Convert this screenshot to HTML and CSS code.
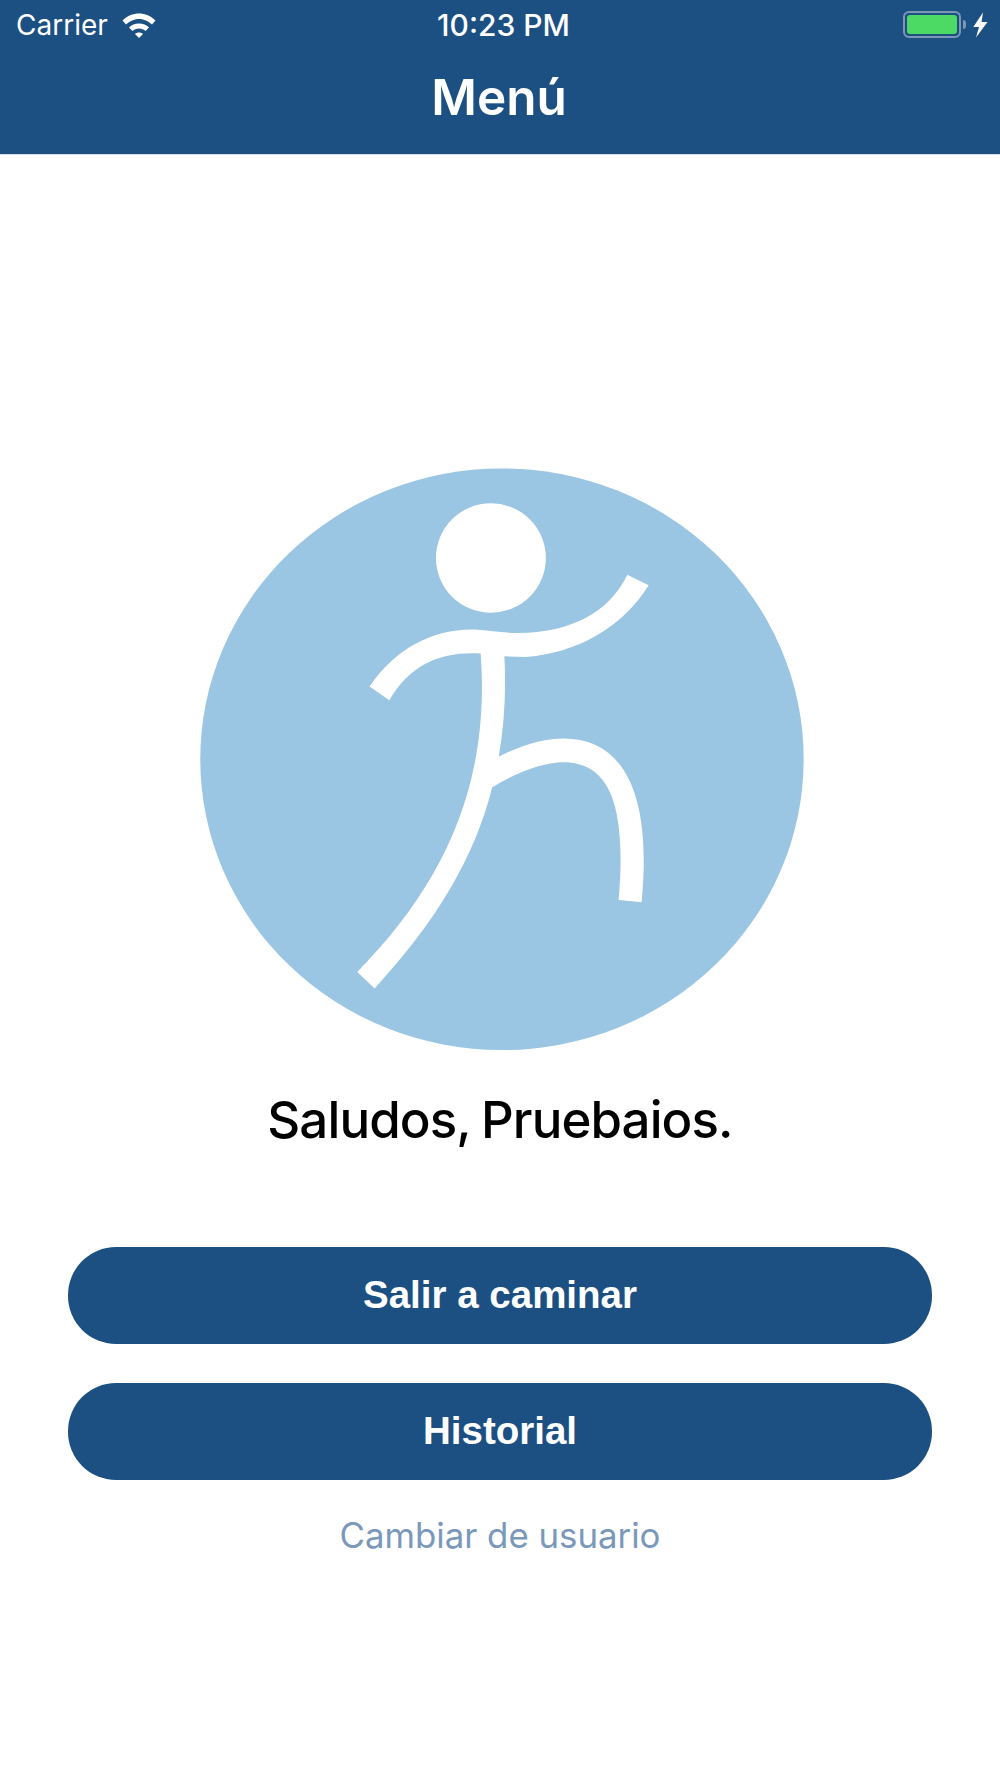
FILE: index.html
```html
<!DOCTYPE html>
<html lang="es">
<head>
    <meta charset="UTF-8">
    <meta name="viewport" content="width=device-width, initial-scale=1.0">
    <title>Menú</title>
    <link rel="stylesheet" href="styles.css">
</head>
<body>

<header class="header">
    <div class="status-bar">
        <div class="status-left">
            <span>Carrier</span>
            <svg class="wifi" width="34" height="25" viewBox="0 0 34 25">
                <path d="M0.5 7.5C5 3 11 0.5 17 0.5C23 0.5 29 3 33.5 7.5L30 11.5C27 8.5 22 6 17 6C12 6 7 8.5 4 11.5Z"/>
                <path d="M7 14.5C9.5 12 13 10.5 17 10.5C21 10.5 24.5 12 27 14.5L23.5 18C22 16.5 19.5 15.5 17 15.5C14.5 15.5 12 16.5 10.5 18Z"/>
                <path d="M13 21C14 20 15.5 19.5 17 19.5C18.5 19.5 20 20 21 21L17 25Z"/>
            </svg>
        </div>
        <div class="status-time">10:23 PM</div>
        <div class="status-right">
            <div class="battery"><div class="battery-level"></div></div>
            <div class="battery-nub"></div>
            <svg class="bolt" width="15" height="26" viewBox="0 0 15 26">
                <path d="M10 0.5L0.3 15H6L3 25.5L14.5 10H8.5Z"/>
            </svg>
        </div>
    </div>
    <h1 class="title">Menú</h1>
</header>

<main class="content">
    <svg class="logo" width="620" height="600" viewBox="0 0 1568 1568" preserveAspectRatio="none">
        <ellipse class="logo-bg" cx="789" cy="782" rx="763" ry="760"/>
        <ellipse class="logo-fig" cx="761" cy="256" rx="139" ry="143"/>
        <path class="logo-fig" d="M454 592C520 490 620 440 720 443C760 446 790 452 830 452C960 452 1060 400 1106 300L1160 327C1095 435 985 502 850 515L795 513C800 600 795 690 781 775C850 740 900 728 945 728C1090 728 1170 860 1142 1156L1084 1150C1105 900 1060 790 945 790C890 790 820 820 764 856C720 1040 620 1210 467 1381L423 1338C640 1110 760 850 735 506C640 500 560 530 504 628Z"/>
    </svg>
    <p class="greeting">Saludos, Pruebaios.</p>
    <div class="actions">
        <button class="btn">Salir a caminar</button>
        <button class="btn">Historial</button>
    </div>
    <a class="switch-user" href="#">Cambiar de usuario</a>
</main>

</body>
</html>
```

FILE: styles.css
```css
body {
    margin: 0;
    height: 1778px;
    background-color: #fff;
    font-family: 'Inter', sans-serif;
    overflow: hidden;
}
.header {
    height: 154px;
    background-color: #1c5082;
    border-bottom: 1px solid #d5dde6;
    color: #fff;
}
.status-bar {
    display: grid;
    grid-template-columns: 1fr auto 1fr;
    align-items: center;
    height: 50px;
    padding: 0 12px 0 16px;
    font-size: 28px;
}
.status-left {
    display: flex;
    align-items: center;
    gap: 14px;
}
.wifi, .bolt {
    fill: #fff;
}
.status-time {
    padding-left: 3px;
    font-size: 30px;
    font-weight: 500;
}
.status-right {
    display: flex;
    align-items: center;
    justify-content: flex-end;
    padding-bottom: 2px;
}
.battery {
    width: 49.5px;
    height: 19px;
    padding: 2px;
    border: 2px solid #7a97b8;
    border-radius: 6px;
}
.battery-level {
    height: 100%;
    background-color: #4cd964;
    border-radius: 3px;
}
.battery-nub {
    width: 3px;
    height: 9px;
    margin: 0 7px 0 2.5px;
    background-color: #7a97b8;
    border-radius: 0 3px 3px 0;
}
.bolt {
    margin-top: 2px;
}
.title {
    margin: 0;
    padding-right: 2px;
    line-height: 94px;
    text-align: center;
    font-size: 49.5px;
    font-weight: 600;
}
.content {
    display: flex;
    flex-direction: column;
    align-items: center;
    padding-top: 305px;
}
.logo {
    display: block;
}
.logo-bg {
    fill: #9ac5e3;
}
.logo-fig {
    fill: #fff;
}
.greeting {
    margin: 30px 0 0;
    line-height: 60px;
    font-size: 51px;
    font-weight: 450;
    letter-spacing: -0.9px;
    word-spacing: -2px;
    color: #000;
}
.actions {
    display: flex;
    flex-direction: column;
    gap: 39.5px;
    width: 864px;
    margin-top: 97px;
}
.btn {
    height: 96.5px;
    border: none;
    border-radius: 48px;
    background-color: #1c5082;
    color: #fff;
    font-family: 'Liberation Sans', sans-serif;
    font-size: 38.5px;
    font-weight: bold;
}
.switch-user {
    margin-top: 33.5px;
    line-height: 44px;
    font-size: 34.8px;
    color: #7a98ba;
    text-decoration: none;
}
```
